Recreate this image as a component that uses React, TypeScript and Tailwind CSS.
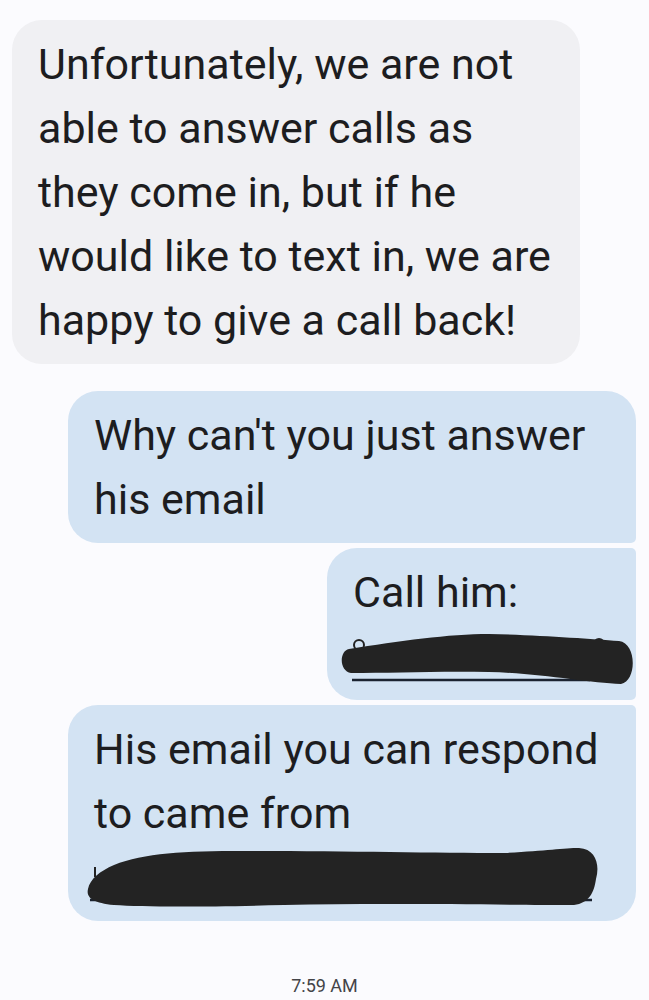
import React from 'react';

function Bubble({
  lines,
  className,
  children,
}: {
  lines: string[];
  className: string;
  children?: React.ReactNode;
}) {
  return (
    <div className={`px-[26px] py-[12px] ${className}`}>
      {lines.map((line, i) => (
        <div key={i} className="whitespace-nowrap h-[64px] leading-[64px]">
          {line}
        </div>
      ))}
      {children}
    </div>
  );
}

// scribbled-out phone number
function PhoneRedaction() {
  return (
    <div className="h-[64px] relative">
      <svg width="300" height="66" viewBox="0 0 300 66" className="absolute left-[-14px] top-0">
        <line x1="13" y1="56" x2="251" y2="56" stroke="#1b2330" strokeWidth="2.5" />
        <circle cx="20" cy="21" r="5" fill="none" stroke="#222" strokeWidth="2" />
        <circle cx="237" cy="20" r="5" fill="none" stroke="#222" strokeWidth="2" />
        <circle cx="260" cy="20" r="5" fill="none" stroke="#222" strokeWidth="2" />
        <path
          d="M10 25 C 60 17, 110 10, 150 10 C 200 11, 250 15, 280 17 C 298 19, 298 57, 282 60 C 250 59, 200 49, 150 48 C 100 47, 50 49, 12 49 C 0 47, 0 27, 10 25 Z"
          fill="#232323"
        />
      </svg>
    </div>
  );
}

// scribbled-out email address
function EmailRedaction() {
  return (
    <div className="h-[64px] relative">
      <svg width="520" height="66" viewBox="0 0 520 66" className="absolute left-[-10px] top-0">
        <line x1="6" y1="55" x2="508" y2="55" stroke="#1b2330" strokeWidth="2.5" />
        <path d="M11 22 L11 32 M506 32 L506 48" stroke="#222" strokeWidth="2" />
        <path
          d="M4 44 C 6 34, 16 26, 30 20 C 60 8, 100 6, 160 6 C 260 6, 350 8, 420 8 C 460 6, 480 3, 495 3 C 512 4, 516 20, 512 34 C 510 48, 505 58, 490 60 C 420 60, 300 58, 200 60 C 120 62, 60 62, 30 60 C 8 58, 2 52, 4 44 Z"
          fill="#232323"
        />
      </svg>
    </div>
  );
}

export default function App() {
  return (
    <div
      className="w-[649px] h-[1000px] bg-[#fbfbfe] text-[#1d1d1f] text-[43px] flex flex-col pt-[20px] overflow-hidden"
      style={{ fontFamily: 'Roboto, "Liberation Sans", sans-serif' }}
    >
      <Bubble
        className="ml-[12px] w-[568px] bg-[#f0f0f3] rounded-[30px]"
        lines={[
          'Unfortunately, we are not',
          'able to answer calls as',
          'they come in, but if he',
          'would like to text in, we are',
          'happy to give a call back!',
        ]}
      />

      <div className="mt-[27px] flex flex-col items-end gap-[5px] pr-[13px]">
        <Bubble
          className="w-[568px] bg-[#d3e3f3] rounded-t-[30px] rounded-bl-[30px] rounded-br-[5px]"
          lines={["Why can't you just answer", 'his email']}
        />
        <Bubble
          className="w-[309px] bg-[#d3e3f3] rounded-l-[30px] rounded-r-[5px]"
          lines={['Call him:']}
        >
          <PhoneRedaction />
        </Bubble>
        <Bubble
          className="w-[568px] bg-[#d3e3f3] rounded-b-[30px] rounded-tl-[30px] rounded-tr-[5px]"
          lines={['His email you can respond', 'to came from']}
        >
          <EmailRedaction />
        </Bubble>
      </div>

      <div className="mt-[51px] text-center text-[18px] leading-[28px] text-[#444448]">7:59 AM</div>
    </div>
  );
}
